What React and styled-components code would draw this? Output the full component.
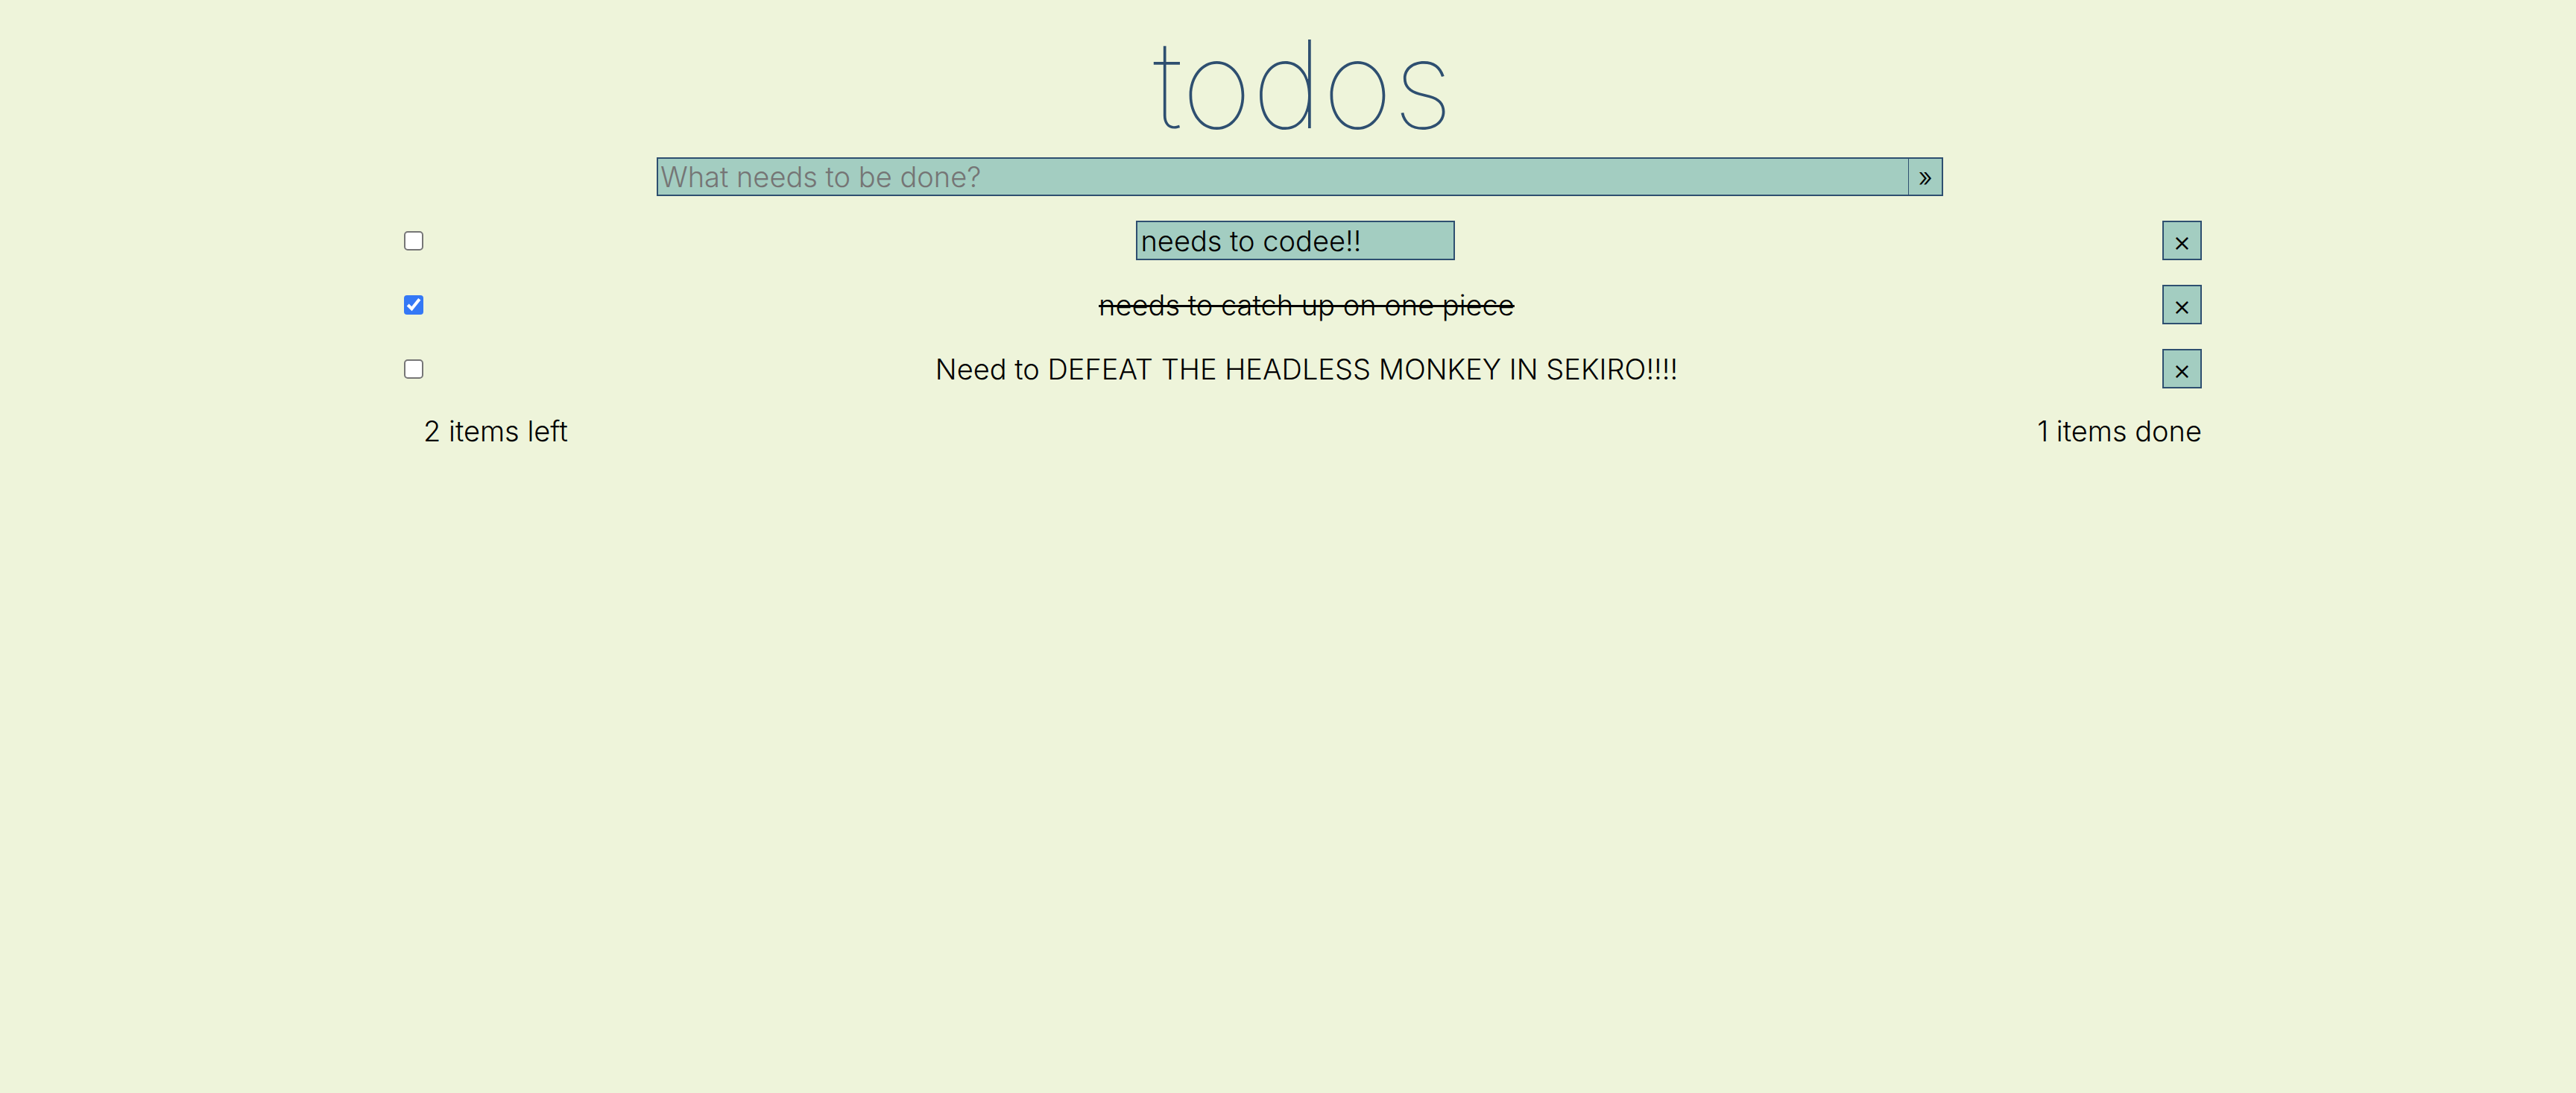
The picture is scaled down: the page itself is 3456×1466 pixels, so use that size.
import { useState } from "react";
import styled, { createGlobalStyle } from "styled-components";

const GlobalStyle = createGlobalStyle`
    html, body {
        margin: 0;
        background-color: #eef4da;
    }
    body {
        font-family: Inter, "Liberation Sans", sans-serif;
        color: #000;
    }
`

const Page = styled.div`
    min-height: 100vh;
    padding-top: 14px;
    box-sizing: border-box;
`
const Main = styled.main`
    width: 2412px;
    margin-left: 542px;
    display: flex;
    flex-direction: column;
`
const Title = styled.h1`
    margin: 0;
    text-align: center;
    font-size: 163px;
    line-height: 197px;
    font-weight: 120;
    color: #2e4f70;
`
const NewForm = styled.form`
    display: flex;
    width: 1726px;
    height: 52px;
    margin-left: 339px;
`
const NewInput = styled.input`
    flex: 1;
    min-width: 0;
    box-sizing: border-box;
    height: 100%;
    margin: 0;
    padding: 0 3px;
    border: 2px solid #2e4f70;
    border-right: none;
    background-color: #a3cdc1;
    font-family: inherit;
    font-size: 38px;
    font-weight: 300;
    color: #000;
    outline: none;
    &::placeholder {
        color: #757575;
    }
`
const SubmitButton = styled.button`
    width: 47px;
    height: 100%;
    margin: 0;
    padding: 0;
    border: 2px solid #2e4f70;
    border-left-width: 1px;
    background-color: #a3cdc1;
    font-family: inherit;
    font-size: 36px;
    font-weight: 300;
    color: #000;
    cursor: pointer;
`
const List = styled.ul`
    list-style: none;
    margin: 33px 0 0;
    padding: 0;
    display: flex;
    flex-direction: column;
    gap: 33px;
`
const Row = styled.li`
    display: flex;
    align-items: center;
    height: 53px;
`
// native box drawn at double size, like the capture
const Check = styled.input.attrs({ type: "checkbox" })`
    flex: none;
    width: 13px;
    height: 13px;
    margin: 0;
    zoom: 2;
    accent-color: #3478f6;
`
const Label = styled.div`
    flex: 1;
    padding-left: 37px;
    text-align: center;
    font-size: 38px;
    font-weight: 300;
    white-space: nowrap;
    text-decoration: ${props => props.$done ? "line-through" : "none"};
    text-decoration-thickness: 3px;
`
const EditInput = styled.input`
    width: 428px;
    height: 53px;
    box-sizing: border-box;
    margin: 0 31px 0 0;
    padding: 0 5px;
    border: 2px solid #2e4f70;
    background-color: #a3cdc1;
    font-family: inherit;
    font-size: 38px;
    font-weight: 300;
    color: #000;
    outline: none;
    vertical-align: middle;
`
const DeleteButton = styled.button`
    flex: none;
    width: 53px;
    height: 53px;
    margin: 0;
    padding: 0;
    border: 2px solid #2e4f70;
    background-color: #a3cdc1;
    font-family: inherit;
    font-size: 38px;
    font-weight: 300;
    line-height: 1;
    color: #000;
    cursor: pointer;
`
const Footer = styled.footer`
    display: flex;
    justify-content: space-between;
    margin-top: 34px;
    padding-left: 26px;
    font-size: 38px;
    font-weight: 300;
`

const initialTodos = [
    { id: 1, text: "needs to codee!!", done: false, editing: true },
    { id: 2, text: "needs to catch up on one piece", done: true, editing: false },
    { id: 3, text: "Need to DEFEAT THE HEADLESS MONKEY IN SEKIRO!!!!", done: false, editing: false },
]

const App = () => {
    const [todos, setTodos] = useState(initialTodos)

    const toggle = id =>
        setTodos(todos.map(t => t.id === id ? { ...t, done: !t.done } : t))
    const edit = (id, text) =>
        setTodos(todos.map(t => t.id === id ? { ...t, text } : t))
    const remove = id => setTodos(todos.filter(t => t.id !== id))

    const left = todos.filter(t => !t.done).length
    const done = todos.length - left

    return (
        <Page>
            <GlobalStyle />
            <Main>
                <Title>todos</Title>
                <NewForm onSubmit={e => e.preventDefault()}>
                    <NewInput placeholder="What needs to be done?" />
                    <SubmitButton type="submit">»</SubmitButton>
                </NewForm>
                <List>
                    {todos.map(todo => (
                        <Row key={todo.id}>
                            <Check checked={todo.done} onChange={() => toggle(todo.id)} />
                            <Label $done={todo.done}>
                                {todo.editing
                                    ? <EditInput value={todo.text} onChange={e => edit(todo.id, e.target.value)} />
                                    : todo.text}
                            </Label>
                            <DeleteButton onClick={() => remove(todo.id)}>×</DeleteButton>
                        </Row>
                    ))}
                </List>
                <Footer>
                    <span>{left} items left</span>
                    <span>{done} items done</span>
                </Footer>
            </Main>
        </Page>
    )
}

export default App
